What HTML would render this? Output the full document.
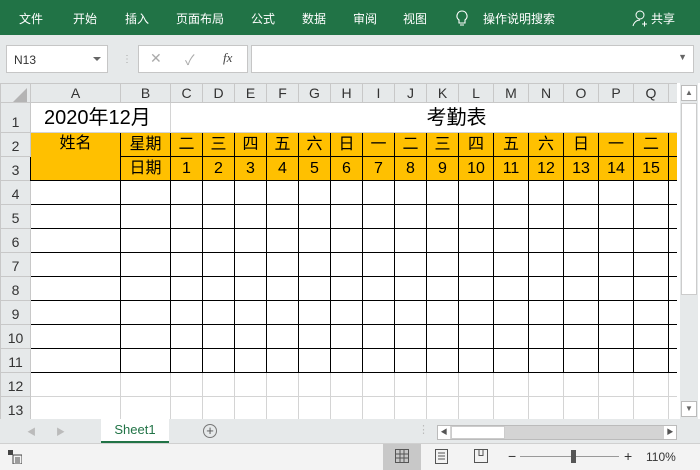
<!DOCTYPE html>
<html><head><meta charset="utf-8"><style>
*{box-sizing:border-box;margin:0;padding:0}
body{width:700px;height:470px;overflow:hidden;position:relative;background:#fff;font-family:"Liberation Sans","Noto Sans CJK SC",sans-serif}
.abs{position:absolute}
#rib{left:0;top:0;width:700px;height:35px;background:#217346;color:#fff;font-size:12px}
#rib span{position:absolute;top:10px}
#fb{left:0;top:35px;width:700px;height:48px;background:#e6e9ea}
.box{position:absolute;background:#fff;border:1px solid #c6c6c6}
#grid{left:0;top:83px;width:677px;height:336px;overflow:hidden;background:#fff}
table{border-collapse:collapse;table-layout:fixed;font-size:16px}
td{border:1px solid #d4d4d4;text-align:center;padding:0;overflow:hidden;white-space:nowrap;line-height:20px}
tr.h td{background:#e6e9ea;color:#333;font-size:14px;border-color:#c8c8c8;height:19px;line-height:17px}
td.rh{background:#e6e9ea;color:#333;font-size:14px;text-align:center;border-color:#c8c8c8;vertical-align:bottom}
.y{background:#ffc000}
.b{border:1px solid #000}
tr.r24 td{height:24px}
#vs{left:680px;top:83px;width:18px;height:336px;background:#e6e9ea}
#tabs{left:0;top:419px;width:700px;height:24px;background:#e6e9ea}
#st{left:0;top:443px;width:700px;height:27px;background:#f3f3f3;border-top:1px solid #d0d0d0;font-size:12px;color:#333}
</style></head><body>
<div id="rib" class="abs">
<span style="left:19px">文件</span><span style="left:73px">开始</span><span style="left:125px">插入</span><span style="left:176px">页面布局</span><span style="left:251px">公式</span><span style="left:302px">数据</span><span style="left:353px">审阅</span><span style="left:403px">视图</span>
<svg class="abs" style="left:456px;top:10px" width="12" height="17" viewBox="0 0 12 17"><path d="M6 1a5 5 0 0 0-3 9v3h6v-3a5 5 0 0 0-3-9zM4 15h4" fill="none" stroke="#fff" stroke-width="1.1"/></svg>
<span style="left:483px">操作说明搜索</span>
<svg class="abs" style="left:632px;top:10px" width="16" height="17" viewBox="0 0 16 17"><circle cx="8" cy="5" r="4" fill="none" stroke="#fff"/><path d="M1 16c1-4 4-6 7-6M10 14h5M12.5 11.5v5" fill="none" stroke="#fff"/></svg>
<span style="left:651px">共享</span>
</div>
<div id="fb" class="abs">
<div class="box" style="left:6px;top:10px;width:102px;height:28px;font-size:12px;color:#333;padding:7px 0 0 7px">N13<span style="position:absolute;right:6px;top:11px;border:4px solid transparent;border-top:4px solid #666"></span></div>
<div class="abs" style="left:122px;top:19px;color:#aaa;font-size:10px">⋮</div>
<div class="box" style="left:138px;top:10px;width:110px;height:28px;color:#aaa;font-size:14px"><span class="abs" style="left:11px;top:4px">✕</span><span class="abs" style="left:46px;top:4px">✓</span><span class="abs" style="left:84px;top:4px;color:#444;font-style:italic;font-family:'Liberation Serif',serif;font-size:13px">fx</span></div>
<div class="box" style="left:251px;top:10px;width:443px;height:28px"><span class="abs" style="right:6px;top:6px;color:#666;font-size:9px">▼</span></div>
</div>
<div id="grid" class="abs">
<table style="width:686px">
<colgroup><col style="width:30px"><col style="width:90px"><col style="width:50px"><col span="9" style="width:32px"><col span="6" style="width:35px"><col style="width:18px"></colgroup>
<tr class="h"><td><svg width="14" height="14" style="display:block;margin:3px 0 0 12px"><path d="M14 0V14H0Z" fill="#b4b4b4"/></svg></td><td>A</td><td>B</td><td>C</td><td>D</td><td>E</td><td>F</td><td>G</td><td>H</td><td>I</td><td>J</td><td>K</td><td>L</td><td>M</td><td>N</td><td>O</td><td>P</td><td>Q</td><td></td></tr>
<tr style="height:30px"><td class="rh">1</td><td colspan="2" style="font-size:20px;text-align:left;padding-left:13px">2020年12月</td><td colspan="16" style="font-size:20px;padding-left:56px">考勤表</td></tr>
<tr class="r24"><td class="rh">2</td><td class="y b" rowspan="2" style="vertical-align:top;padding-top:1px">姓名</td><td class="y b">星期</td><td class="y b">二</td><td class="y b">三</td><td class="y b">四</td><td class="y b">五</td><td class="y b">六</td><td class="y b">日</td><td class="y b">一</td><td class="y b">二</td><td class="y b">三</td><td class="y b">四</td><td class="y b">五</td><td class="y b">六</td><td class="y b">日</td><td class="y b">一</td><td class="y b">二</td><td class="y b"></td></tr>
<tr class="r24"><td class="rh">3</td><td class="y b">日期</td><td class="y b">1</td><td class="y b">2</td><td class="y b">3</td><td class="y b">4</td><td class="y b">5</td><td class="y b">6</td><td class="y b">7</td><td class="y b">8</td><td class="y b">9</td><td class="y b">10</td><td class="y b">11</td><td class="y b">12</td><td class="y b">13</td><td class="y b">14</td><td class="y b">15</td><td class="y b"></td></tr>
<tr class="r24"><td class="rh">4</td><td class="b"></td><td class="b"></td><td class="b"></td><td class="b"></td><td class="b"></td><td class="b"></td><td class="b"></td><td class="b"></td><td class="b"></td><td class="b"></td><td class="b"></td><td class="b"></td><td class="b"></td><td class="b"></td><td class="b"></td><td class="b"></td><td class="b"></td><td class="b"></td></tr>
<tr class="r24"><td class="rh">5</td><td class="b"></td><td class="b"></td><td class="b"></td><td class="b"></td><td class="b"></td><td class="b"></td><td class="b"></td><td class="b"></td><td class="b"></td><td class="b"></td><td class="b"></td><td class="b"></td><td class="b"></td><td class="b"></td><td class="b"></td><td class="b"></td><td class="b"></td><td class="b"></td></tr>
<tr class="r24"><td class="rh">6</td><td class="b"></td><td class="b"></td><td class="b"></td><td class="b"></td><td class="b"></td><td class="b"></td><td class="b"></td><td class="b"></td><td class="b"></td><td class="b"></td><td class="b"></td><td class="b"></td><td class="b"></td><td class="b"></td><td class="b"></td><td class="b"></td><td class="b"></td><td class="b"></td></tr>
<tr class="r24"><td class="rh">7</td><td class="b"></td><td class="b"></td><td class="b"></td><td class="b"></td><td class="b"></td><td class="b"></td><td class="b"></td><td class="b"></td><td class="b"></td><td class="b"></td><td class="b"></td><td class="b"></td><td class="b"></td><td class="b"></td><td class="b"></td><td class="b"></td><td class="b"></td><td class="b"></td></tr>
<tr class="r24"><td class="rh">8</td><td class="b"></td><td class="b"></td><td class="b"></td><td class="b"></td><td class="b"></td><td class="b"></td><td class="b"></td><td class="b"></td><td class="b"></td><td class="b"></td><td class="b"></td><td class="b"></td><td class="b"></td><td class="b"></td><td class="b"></td><td class="b"></td><td class="b"></td><td class="b"></td></tr>
<tr class="r24"><td class="rh">9</td><td class="b"></td><td class="b"></td><td class="b"></td><td class="b"></td><td class="b"></td><td class="b"></td><td class="b"></td><td class="b"></td><td class="b"></td><td class="b"></td><td class="b"></td><td class="b"></td><td class="b"></td><td class="b"></td><td class="b"></td><td class="b"></td><td class="b"></td><td class="b"></td></tr>
<tr class="r24"><td class="rh">10</td><td class="b"></td><td class="b"></td><td class="b"></td><td class="b"></td><td class="b"></td><td class="b"></td><td class="b"></td><td class="b"></td><td class="b"></td><td class="b"></td><td class="b"></td><td class="b"></td><td class="b"></td><td class="b"></td><td class="b"></td><td class="b"></td><td class="b"></td><td class="b"></td></tr>
<tr class="r24"><td class="rh">11</td><td class="b"></td><td class="b"></td><td class="b"></td><td class="b"></td><td class="b"></td><td class="b"></td><td class="b"></td><td class="b"></td><td class="b"></td><td class="b"></td><td class="b"></td><td class="b"></td><td class="b"></td><td class="b"></td><td class="b"></td><td class="b"></td><td class="b"></td><td class="b"></td></tr>
<tr class="r24"><td class="rh">12</td><td></td><td></td><td></td><td></td><td></td><td></td><td></td><td></td><td></td><td></td><td></td><td></td><td></td><td></td><td></td><td></td><td></td><td></td></tr>
<tr class="r24"><td class="rh">13</td><td></td><td></td><td></td><td></td><td></td><td></td><td></td><td></td><td></td><td></td><td></td><td></td><td></td><td></td><td></td><td></td><td></td><td></td></tr>
</table>
</div>
<div id="vs" class="abs">
<div class="abs" style="left:1px;top:2px;width:16px;height:16px;background:#fff;border:1px solid #bbb;font-size:8px;color:#666;text-align:center;line-height:14px">▲</div>
<div class="abs" style="left:1px;top:20px;width:16px;height:192px;background:#fff;border:1px solid #ccc"></div>
<div class="abs" style="left:1px;top:318px;width:16px;height:16px;background:#fff;border:1px solid #bbb;font-size:8px;color:#666;text-align:center;line-height:14px">▼</div>
</div>
<div id="tabs" class="abs">
<span class="abs" style="left:27px;top:6px;font-size:9px;color:#bbb">◀</span><span class="abs" style="left:56px;top:6px;font-size:9px;color:#bbb">▶</span>
<div class="abs" style="left:101px;top:0;width:68px;height:24px;background:#fff;border-bottom:2px solid #217346;color:#217346;font-size:13px;text-align:center;line-height:22px">Sheet1</div>
<div class="abs" style="left:203px;top:5px;width:14px;height:14px;border:1px solid #777;border-radius:50%;font-size:13px;line-height:11px;text-align:center;color:#555">+</div>
<span class="abs" style="left:418px;top:4px;color:#bbb;font-size:11px">⋮</span>
<div class="abs" style="left:437px;top:6px;width:240px;height:15px;background:#d4d4d4;border:1px solid #bbb"></div>
<div class="abs" style="left:438px;top:7px;width:12px;height:13px;background:#fff;font-size:7px;color:#555;line-height:13px;text-align:center">◀</div>
<div class="abs" style="left:451px;top:7px;width:54px;height:13px;background:#fff;border:1px solid #ccc"></div>
<div class="abs" style="left:664px;top:7px;width:12px;height:13px;background:#fff;font-size:7px;color:#555;line-height:13px;text-align:center">▶</div>
</div>
<div id="st" class="abs">
<svg class="abs" style="left:8px;top:6px" width="14" height="14"><rect x="0" y="0" width="5" height="5" fill="#444"/><rect x="5" y="5" width="9" height="9" fill="none" stroke="#444"/><path d="M7 8h5M7 10h5M7 12h5" stroke="#444"/></svg>
<div class="abs" style="left:383px;top:0;width:38px;height:26px;background:#c8c8c8"></div>
<svg class="abs" style="left:395px;top:5px" width="14" height="14"><path d="M.5 .5h13v13H.5zM.5 5h13M.5 9h13M5 .5v13M9 .5v13" fill="none" stroke="#555"/></svg>
<svg class="abs" style="left:435px;top:5px" width="14" height="15"><path d="M.5 .5h12v14H.5zM3 4h7M3 7h7M3 10h7" fill="none" stroke="#555"/></svg>
<svg class="abs" style="left:474px;top:5px" width="14" height="14"><path d="M.5 .5h13v13H.5zM5 .5v6h4v-6" fill="none" stroke="#555"/></svg>
<span class="abs" style="left:508px;top:4px;font-size:14px">−</span>
<div class="abs" style="left:520px;top:12px;width:99px;height:1px;background:#999"></div>
<div class="abs" style="left:571px;top:6px;width:5px;height:13px;background:#555"></div>
<span class="abs" style="left:624px;top:4px;font-size:14px">+</span>
<span class="abs" style="left:646px;top:6px;font-size:12px">110%</span>
</div>
</body></html>
